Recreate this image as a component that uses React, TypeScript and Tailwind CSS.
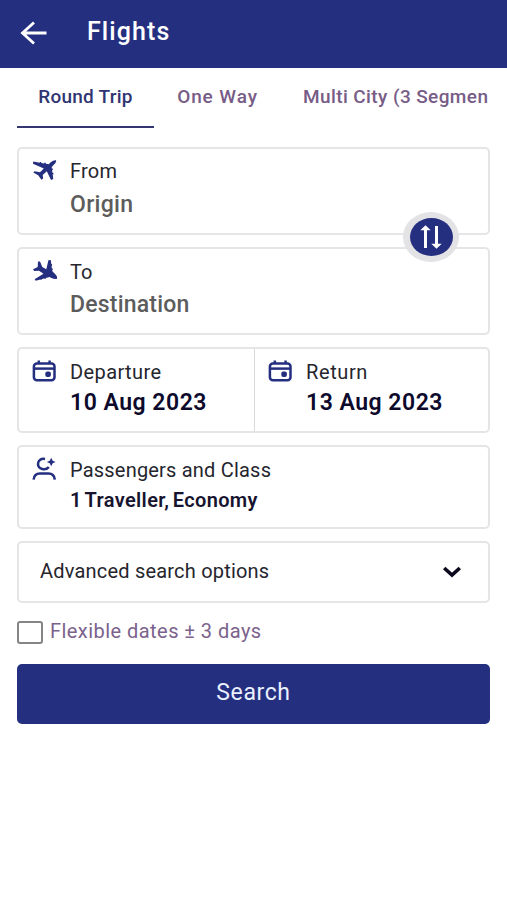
import { useState } from 'react'
import { clsx } from 'clsx'

const TABS = [
  { id: 'round', label: 'Round Trip', className: 'w-[137px] tracking-[0.25px]' },
  { id: 'oneway', label: 'One Way', className: 'ml-[23px] w-[81px] tracking-[0.9px]' },
  { id: 'multi', label: 'Multi City (3 Segmen', className: 'ml-[45px] tracking-[0.4px]' },
]

const TAKEOFF_PATH =
  'M23 .2C21 0 19.5.8 17.8 2.3L15.5 4.3 12.8 3.8V2.8H11.3V3.5L8.2 2.9V2H6.8V2.7L.2 1.5 0 3.7 10.8 8.6 7 12.2 1.5 11.2.3 12.6 5.2 15.3 8.4 19.8 10.2 18.6 9.7 14.9 13.8 11.3 18 20 20.3 19 19.7 14.5H20.4V12.8H19.4L19.1 10H19.8V8.4H18.8L18.7 6.9 21 4.5C22.6 3 23.6 1.3 23 .2Z'
const LANDING_PATH =
  'M24 18.7C22.5 19.4 20.5 18.8 18.5 17.9L16.5 16.9 12.8 18V18.8H11.3V18.4L8.8 19.1V19.8H7.4V19.5L2.8 20.8 1.6 19.3 10.5 13.7 6 10.8 1.2 11 0 9.3 4.7 7.1 5 1.5 7 1.5 9.3 7 13.3 9.3 15.4.2 17.8 0 18.3 4H19V5.7H18.5L18.9 8.4H19.7V10.1H19.2L19.6 11.6 21.8 13.7C23.3 15.1 24.6 17 24 18.7Z'

function PlaneIcon({ landing = false }: { landing?: boolean }) {
  return (
    <svg viewBox="0 0 24 22" className="mt-[1px] w-[24px] h-[22px] shrink-0 text-[#252f80]" fill="currentColor">
      <path d={landing ? LANDING_PATH : TAKEOFF_PATH} />
    </svg>
  )
}

function CalendarIcon() {
  return (
    <svg viewBox="0 0 24 22" className="mt-[1px] w-[24px] h-[22px] shrink-0 text-[#252f80]" fill="none" stroke="currentColor" strokeWidth="2.5">
      <path d="M6.8.6v3M17.6.6v3" />
      <rect x="1.9" y="3.4" width="20.6" height="16.9" rx="3" />
      <path d="M1.5 8.6h21" />
      <rect x="13.3" y="11.6" width="5.6" height="5.4" rx="2" fill="currentColor" stroke="none" />
    </svg>
  )
}

function PassengerIcon() {
  return (
    <svg viewBox="0 0 24 24" className="w-[24px] h-[24px] shrink-0 text-[#252f80]" fill="none" stroke="currentColor" strokeWidth="2.5">
      <path d="M13 1.9C8.7 1.2 6 3.8 6 7c0 5.3 7.8 7 10.8 2.9" />
      <path d="M19.2.8 20.7 3.7 23.6 5 20.7 6.3 19.2 9.2 17.7 6.3 14.8 5 17.7 3.7z" fill="currentColor" stroke="none" />
      <path d="M1.6 22.6c.5-4 2.8-6 6.2-6h8.8c3.4 0 5.7 2 6.2 6" />
    </svg>
  )
}

export default function App() {
  const [tab, setTab] = useState('round')
  const [flexible, setFlexible] = useState(false)

  return (
    <div className="w-full h-[900px] overflow-hidden bg-white font-['Roboto',sans-serif] text-[#25252d]">
      {/* Header */}
      <header className="h-[68px] flex items-center bg-[#252f80] pb-[5px] text-white">
        <button className="ml-[20px] mt-[3px]">
          <svg viewBox="0 0 28 24" className="w-[28px] h-[24px]" fill="none" stroke="currentColor" strokeWidth="2.8">
            <path d="M26.5 12H2.5M14 1.5 2.5 12 14 22.5" />
          </svg>
        </button>
        <h1 className="ml-[39px] text-[25px] leading-[30px] font-medium tracking-[1.1px]">Flights</h1>
      </header>

      <main className="px-[17px]">
        {/* Trip type */}
        <nav className="flex h-[60px] overflow-hidden whitespace-nowrap text-[19px] font-medium">
          {TABS.map(t => (
            <button
              key={t.id}
              onClick={() => setTab(t.id)}
              className={clsx(
                'shrink-0 border-b-2 pt-[1px]',
                t.className,
                tab === t.id ? 'border-[#34376f] text-[#303572]' : 'border-transparent text-[#775c86]'
              )}
            >
              {t.label}
            </button>
          ))}
        </nav>

        {/* Origin and destination */}
        <div className="relative mt-[19px] flex flex-col gap-[12px]">
          <div className="flex h-[88px] rounded-[5px] border-2 border-[#e5e5e7] pl-[14px] pt-[10px]">
            <PlaneIcon />
            <div className="ml-[13px]">
              <p className="text-[20px] leading-[25px] tracking-[0.2px]">From</p>
              <p className="mt-[6px] text-[23px] leading-[30px] font-medium tracking-[0.3px] text-[#5c5c5c]">Origin</p>
            </div>
          </div>
          <div className="flex h-[88px] rounded-[5px] border-2 border-[#e5e5e7] pl-[14px] pt-[10px]">
            <PlaneIcon landing />
            <div className="ml-[13px]">
              <p className="text-[20px] leading-[26px]">To</p>
              <p className="mt-[5px] text-[23px] leading-[30px] font-medium tracking-[0.2px] text-[#5c5c5c]">Destination</p>
            </div>
          </div>
          <button className="absolute right-[31px] top-[65px] flex h-[50px] w-[56px] items-center justify-center rounded-[50%] bg-[#e3e3e6]">
            <span className="flex h-[38px] w-[43px] items-center justify-center rounded-[50%] bg-[#252f80] text-white">
              <svg viewBox="0 0 22 24" className="w-[22px] h-[24px]" fill="none" stroke="currentColor" strokeWidth="3">
                <path d="M5.5 23V3M16.5 1v20" />
                <path d="M.3 5.3 5.5.2l5.2 5.1zM11.3 18.7l5.2 5.1 5.2-5.1z" fill="currentColor" stroke="none" />
              </svg>
            </span>
          </button>
        </div>

        {/* Dates */}
        <div className="mt-[12px] flex h-[86px] rounded-[5px] border-2 border-[#e5e5e7]">
          <div className="flex w-[236px] border-r border-[#d9d9dc] pl-[13px] pt-[10px]">
            <CalendarIcon />
            <div className="ml-[14px] whitespace-nowrap">
              <p className="text-[20px] leading-[26px] tracking-[0.4px]">Departure</p>
              <p className="mt-[4px] text-[23px] leading-[28px] font-semibold tracking-[0.5px] text-[#0d0a2c]">10 Aug 2023</p>
            </div>
          </div>
          <div className="flex flex-1 pl-[13px] pt-[10px]">
            <CalendarIcon />
            <div className="ml-[14px] whitespace-nowrap">
              <p className="text-[20px] leading-[26px] tracking-[0.6px]">Return</p>
              <p className="mt-[4px] text-[23px] leading-[28px] font-semibold tracking-[0.5px] text-[#0d0a2c]">13 Aug 2023</p>
            </div>
          </div>
        </div>

        {/* Passengers */}
        <div className="mt-[12px] flex h-[84px] rounded-[5px] border-2 border-[#e5e5e7] pl-[13px] pt-[10px]">
          <PassengerIcon />
          <div className="ml-[14px]">
            <p className="text-[20px] leading-[26px] tracking-[0.2px]">Passengers and Class</p>
            <p className="mt-[4px] text-[20px] leading-[26px] font-semibold tracking-[0.35px] [word-spacing:-2px] text-[#17142f]">1 Traveller, Economy</p>
          </div>
        </div>

        <button className="mt-[12px] flex h-[62px] w-full items-center justify-between rounded-[5px] border-2 border-[#e5e5e7] pl-[21px] pr-[26px]">
          <span className="pb-[2px] text-[20px] tracking-[0.2px]">Advanced search options</span>
          <svg viewBox="0 0 20 12" className="w-[20px] h-[12px] text-[#0d0a20]" fill="none" stroke="currentColor" strokeWidth="3.6">
            <path d="m2.2 2 7.8 7 7.8-7" />
          </svg>
        </button>

        <label className="mt-[16px] flex h-[26px] items-center">
          <input
            type="checkbox"
            checked={flexible}
            onChange={e => setFlexible(e.target.checked)}
            className="mt-[1px] h-[23px] w-[26px] appearance-none rounded-[3px] border-2 border-[#858585] bg-white checked:bg-[#252f80]"
          />
          <span className="ml-[7px] pb-[2px] text-[20px] tracking-[0.45px] text-[#7b628c]">Flexible dates ± 3 days</span>
        </label>

        <button className="mt-[19px] h-[60px] w-full rounded-[5px] bg-[#252f80] pb-[2px] text-[23px] tracking-[0.6px] text-[#e9f0ff]">
          Search
        </button>
      </main>
    </div>
  )
}
